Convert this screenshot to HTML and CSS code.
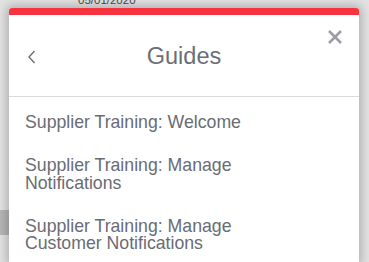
FILE: index.html
```html
<!DOCTYPE html>
<html>
<head>
<meta charset="utf-8">
<link rel="stylesheet" href="styles.css">
</head>
<body>
<div class="page">
  <div class="date">05/01/2020</div>
  <div class="side-block"></div>
</div>
<div class="modal">
  <div class="modal-bar"></div>
  <div class="modal-header">
    <button class="back" aria-label="Back">
      <svg width="8" height="14" viewBox="0 0 8 14"><path d="M6.5 1 L1 7 L6.5 13" fill="none" stroke="#6b6e76" stroke-width="1.4"/></svg>
    </button>
    <h1 class="title">Guides</h1>
    <button class="close" aria-label="Close">
      <svg width="14" height="14" viewBox="0 0 14 14"><path d="M1 1 L13 13 M13 1 L1 13" fill="none" stroke="#9c9ea5" stroke-width="2.6"/></svg>
    </button>
  </div>
  <ul class="guide-list">
    <li class="guide-item">Supplier Training: Welcome</li>
    <li class="guide-item">Supplier Training: Manage Notifications</li>
    <li class="guide-item">Supplier Training: Manage Customer Notifications</li>
  </ul>
</div>
</body>
</html>
```
FILE: styles.css
```css
html, body {
  margin: 0;
  padding: 0;
}
body {
  width: 369px;
  height: 262px;
  overflow: hidden;
  background: #e3e3e3;
  font-family: "Liberation Sans", Arial, sans-serif;
  position: relative;
}
.page {
  display: flex;
  flex-direction: column;
}
.date {
  margin-top: -6px;
  margin-left: 78px;
  font-size: 11.5px;
  line-height: 12px;
  color: #4a4a4a;
}
.side-block {
  margin-top: 204px;
  width: 30px;
  height: 25px;
  background: #b7b7b7;
}
.modal {
  position: absolute;
  left: 9px;
  top: 8px;
  width: 350px;
  height: 254px;
  background: #ffffff;
  border-radius: 3px 3px 0 0;
  box-shadow: 0 0 10px 3px rgba(0, 0, 0, 0.22);
  overflow: hidden;
}
.modal-bar {
  height: 7px;
  background: #f7333f;
}
.modal-header {
  height: 81px;
  border-bottom: 1px solid #dadade;
  display: grid;
  grid-template-columns: 48px 1fr 48px;
  align-items: center;
}
.back {
  justify-self: start;
  margin-left: 19px;
  padding: 0;
  border: 0;
  background: none;
  display: flex;
  margin-top: 2px;
}
.title {
  margin: 0;
  text-align: center;
  font-weight: normal;
  font-size: 23.5px;
  color: #6b6e76;
  line-height: 28px;
}
.close {
  align-self: start;
  justify-self: start;
  margin-top: 15px;
  margin-left: 17px;
  padding: 0;
  border: 0;
  background: none;
  display: flex;
}
.guide-list {
  list-style: none;
  margin: 0;
  padding: 4px 0 0;
}
.guide-item {
  padding: 13px 80px 13px 16px;
  font-size: 17.7px;
  line-height: 17.3px;
  color: #696c74;
}
```
